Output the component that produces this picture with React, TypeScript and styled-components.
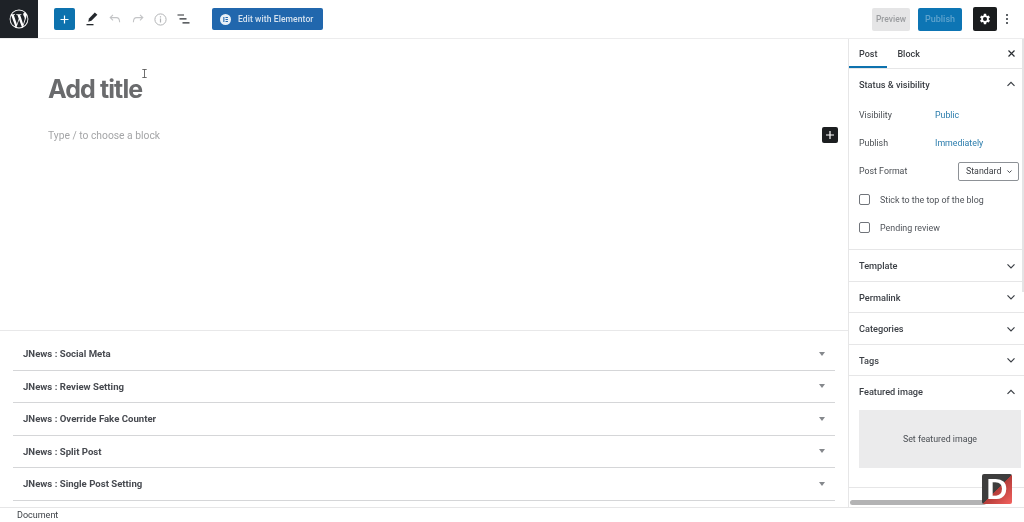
import React from "react";
import styled, { createGlobalStyle } from "styled-components";

const GlobalStyle = createGlobalStyle`
  html, body {
    margin: 0;
    padding: 0;
    background: #fff;
    overflow: hidden;
  }
  body {
    font-family: Roboto, "Liberation Sans", sans-serif;
    color: #2b3036;
  }
`;

const metaBoxes = [
  "JNews : Social Meta",
  "JNews : Review Setting",
  "JNews : Override Fake Counter",
  "JNews : Split Post",
  "JNews : Single Post Setting",
];

const closedPanels = ["Template", "Permalink", "Categories", "Tags"];

const WpLogo = () => (
  <svg width="20" height="20" viewBox="0 0 20 20" fill="#fff">
    <path d="M10 .6a9.4 9.4 0 1 0 0 18.8A9.4 9.4 0 0 0 10 .6zM1.55 10c0-1.22.26-2.38.73-3.43l4.03 11.04A8.45 8.45 0 0 1 1.55 10zM10 18.45c-.83 0-1.63-.12-2.39-.35l2.54-7.37 2.6 7.12.06.12c-.87.31-1.82.48-2.81.48zm1.16-12.41c.51-.03.97-.08.97-.08.46-.06.4-.73-.05-.7 0 0-1.37.1-2.25.1-.83 0-2.23-.1-2.23-.1-.46-.03-.51.67-.06.7 0 0 .43.05.89.08l1.32 3.62-1.86 5.57L4.8 6.04c.51-.03.97-.08.97-.08.46-.06.4-.73-.05-.7 0 0-1.37.1-2.25.1h-.55A8.44 8.44 0 0 1 10 1.55c2.2 0 4.2.84 5.7 2.22h-.11c-.83 0-1.42.72-1.42 1.5 0 .7.4 1.29.83 1.98.32.57.7 1.29.7 2.34 0 .73-.28 1.57-.65 2.75l-.85 2.85-3.04-9.15zm3.09 11.28 2.58-7.46c.48-1.2.64-2.16.64-3.02 0-.31-.02-.6-.06-.87A8.44 8.44 0 0 1 18.45 10c0 3.12-1.69 5.84-4.2 7.32z" />
  </svg>
);

const Chevron = ({ up, size = 12 }: { up?: boolean; size?: number }) => (
  <svg width={size} height={size} viewBox="0 0 12 12" fill="none" stroke="#3a3e44" strokeWidth={size < 12 ? 1.6 : 1.2}>
    <path d={up ? "M2.5 7.8L6 4.3l3.5 3.5" : "M2.5 4.3L6 7.8l3.5-3.5"} />
  </svg>
);

const App: React.FunctionComponent = () => {
  return (
    <Page>
      <GlobalStyle />
      <Header>
        <LogoBox>
          <WpLogo />
        </LogoBox>
        <Tools>
          <AddButton>
            <svg width="9" height="9" viewBox="0 0 9 9" stroke="#fff" strokeWidth="1.2">
              <path d="M4.5 0.5v8M0.5 4.5h8" />
            </svg>
          </AddButton>
          <ToolIcon>
            <svg width="12" height="14" viewBox="0 0 12 14" fill="#24282d">
              <path d="M8.8 0.4l2.6 2.4-6 6-3.2 1 .8-3.2z" />
              <rect x="0.5" y="12" width="7" height="1.3" />
            </svg>
          </ToolIcon>
          <ToolIcon>
            <svg width="12" height="10" viewBox="0 0 12 10" fill="none" stroke="#c3c4c6" strokeWidth="1.1">
              <path d="M4 0.8L1.2 3.6 4 6.4M1.4 3.6h6c2 0 3.2 1.4 3.2 4.6" />
            </svg>
          </ToolIcon>
          <ToolIcon>
            <svg width="12" height="10" viewBox="0 0 12 10" fill="none" stroke="#c3c4c6" strokeWidth="1.1">
              <path d="M8 0.8l2.8 2.8L8 6.4M10.6 3.6h-6c-2 0-3.2 1.4-3.2 4.6" />
            </svg>
          </ToolIcon>
          <ToolIcon>
            <svg width="13" height="13" viewBox="0 0 13 13" fill="none" stroke="#b2b4b6" strokeWidth="1">
              <circle cx="6.5" cy="6.5" r="5.6" />
              <path d="M6.5 5.6v4M6.5 3.2v1.3" strokeWidth="1.2" />
            </svg>
          </ToolIcon>
          <ToolIcon>
            <svg width="13" height="10" viewBox="0 0 13 10" stroke="#2a2e33" strokeWidth="1.2">
              <path d="M0.5 1h6.5M2.5 4.8h7M5.5 8.8h7" />
            </svg>
          </ToolIcon>
        </Tools>
        <ElementorButton>
          <ElementorMark>
            <svg width="11" height="11" viewBox="0 0 10 10">
              <circle cx="5" cy="5" r="5" fill="#e8eff6" />
              <path d="M3 2.7h1v4.6H3zM5 2.7h2.2v.9H5zM5 4.5h2.2v.9H5zM5 6.4h2.2v.9H5z" fill="#2167ad" />
            </svg>
          </ElementorMark>
          Edit with Elementor
        </ElementorButton>
        <HeaderRight>
          <PreviewButton>Preview</PreviewButton>
          <PublishButton>Publish</PublishButton>
          <SettingsButton>
            <svg width="14" height="14" viewBox="0 0 24 24" fill="#fff">
              <path d="M19.4 13a7.6 7.6 0 0 0 0-2l2.1-1.6-2-3.5-2.5 1a7.6 7.6 0 0 0-1.7-1L15 3.2h-4l-.4 2.7a7.6 7.6 0 0 0-1.7 1l-2.4-1-2 3.5L6.6 11a7.6 7.6 0 0 0 0 2l-2.1 1.6 2 3.5 2.5-1a7.6 7.6 0 0 0 1.7 1l.3 2.7h4l.4-2.7a7.6 7.6 0 0 0 1.7-1l2.4 1 2-3.5zM13 15.4a3.5 3.5 0 1 1 0-7 3.5 3.5 0 0 1 0 7z" transform="translate(-1 0)" />
            </svg>
          </SettingsButton>
          <MoreDots>
            <Dot />
            <Dot />
            <Dot />
          </MoreDots>
        </HeaderRight>
      </Header>
      <Body>
        <Editor>
          <Canvas>
            <Title>Add title</Title>
            <BlockRow>
              <Placeholder>Type / to choose a block</Placeholder>
              <BlockAdd>
                <svg width="8" height="8" viewBox="0 0 8 8" stroke="#fff" strokeWidth="1.2">
                  <path d="M4 0v8M0 4h8" />
                </svg>
              </BlockAdd>
            </BlockRow>
            <TextCursor>
              <svg width="5" height="9" viewBox="0 0 5 9" fill="none" stroke="#4a4a4a" strokeWidth="0.8">
                <path d="M0.3 0.5h4.4M0.3 8.5h4.4M2.5 0.5v8" />
              </svg>
            </TextCursor>
          </Canvas>
          <MetaBoxes>
            {metaBoxes.map((item) => (
              <MetaRow key={item}>
                <MetaTitle>{item}</MetaTitle>
                <Caret />
              </MetaRow>
            ))}
          </MetaBoxes>
        </Editor>
        <Sidebar>
          <Tabs>
            <Tab $active>Post</Tab>
            <Tab>Block</Tab>
            <CloseIcon>
              <svg width="7" height="7" viewBox="0 0 7 7" stroke="#2a2e33" strokeWidth="1.2">
                <path d="M0.5 0.5l6 6M6.5 0.5l-6 6" />
              </svg>
            </CloseIcon>
          </Tabs>
          <Panel>
            <PanelHead>
              <PanelTitle>Status &amp; visibility</PanelTitle>
              <Chevron up />
            </PanelHead>
            <StatusBody>
              <Field>
                <FieldLabel>Visibility</FieldLabel>
                <FieldLink>Public</FieldLink>
              </Field>
              <Field>
                <FieldLabel>Publish</FieldLabel>
                <FieldLink>Immediately</FieldLink>
              </Field>
              <Field>
                <FieldLabel>Post Format</FieldLabel>
                <FormatSelect>
                  Standard
                  <Chevron size={7} />
                </FormatSelect>
              </Field>
              <Field>
                <CheckBox />
                <CheckLabel>Stick to the top of the blog</CheckLabel>
              </Field>
              <Field>
                <CheckBox />
                <CheckLabel>Pending review</CheckLabel>
              </Field>
            </StatusBody>
          </Panel>
          {closedPanels.map((item) => (
            <Panel key={item}>
              <PanelHead>
                <PanelTitle>{item}</PanelTitle>
                <Chevron />
              </PanelHead>
            </Panel>
          ))}
          <Panel>
            <PanelHead>
              <PanelTitle>Featured image</PanelTitle>
              <Chevron up />
            </PanelHead>
            <FeaturedBody>
              <FeaturedBox>Set featured image</FeaturedBox>
            </FeaturedBody>
          </Panel>
          <VerticalThumb />
          <HorizontalThumb />
          <Badge>
            <BadgeLetter>D</BadgeLetter>
          </Badge>
        </Sidebar>
      </Body>
      <Footer>Document</Footer>
    </Page>
  );
};

export default App;

const Page = styled.div`
  width: 1024px;
  height: 522px;
  display: flex;
  flex-direction: column;
  overflow: hidden;
  filter: blur(0.45px);
`;

const Header = styled.header`
  height: 38px;
  flex-shrink: 0;
  display: flex;
  align-items: center;
  box-sizing: content-box;
  border-bottom: 1px solid #ececed;
`;

const LogoBox = styled.div`
  width: 38px;
  height: 38px;
  background: #1e2227;
  display: flex;
  align-items: center;
  justify-content: center;
`;

const Tools = styled.div`
  display: flex;
  align-items: center;
  margin-left: 16px;
`;

const AddButton = styled.div`
  width: 21px;
  height: 22px;
  background: #0d72ae;
  border-radius: 2px;
  display: flex;
  align-items: center;
  justify-content: center;
  margin-right: 5px;
`;

const ToolIcon = styled.div`
  width: 23px;
  height: 21px;
  display: flex;
  align-items: center;
  justify-content: center;
`;

const ElementorButton = styled.div`
  margin-left: 17px;
  width: 111px;
  height: 22px;
  box-sizing: border-box;
  background: #2167ad;
  border-radius: 2px;
  color: #d5e2ef;
  font-size: 8.5px;
  font-weight: 500;
  letter-spacing: 0.1px;
  display: flex;
  align-items: center;
  padding-left: 8px;
`;

const ElementorMark = styled.span`
  display: flex;
  margin-right: 7px;
`;

const HeaderRight = styled.div`
  margin-left: auto;
  display: flex;
  align-items: center;
`;

const PreviewButton = styled.div`
  width: 38px;
  height: 23px;
  background: #e5e5e6;
  border-radius: 2px;
  color: #9a9c9f;
  font-size: 8.5px;
  font-weight: 500;
  display: flex;
  align-items: center;
  justify-content: center;
  margin-right: 8px;
`;

const PublishButton = styled.div`
  width: 44px;
  height: 23px;
  background: #0d75b4;
  border-radius: 2px;
  color: #5fa3cd;
  font-size: 9px;
  font-weight: 500;
  display: flex;
  align-items: center;
  justify-content: center;
  margin-right: 11px;
`;

const SettingsButton = styled.div`
  width: 24px;
  height: 24px;
  background: #1a1c1e;
  border-radius: 2px;
  display: flex;
  align-items: center;
  justify-content: center;
  margin-right: 8px;
`;

const MoreDots = styled.div`
  width: 4px;
  display: flex;
  flex-direction: column;
  align-items: center;
  gap: 2px;
  margin-right: 15px;
`;

const Dot = styled.span`
  width: 2px;
  height: 2px;
  border-radius: 50%;
  background: #2b3036;
`;

const Body = styled.div`
  flex: 1;
  min-height: 0;
  display: flex;
`;

const Editor = styled.main`
  flex: 1;
  min-width: 0;
  display: flex;
  flex-direction: column;
`;

const Canvas = styled.div`
  position: relative;
  height: 292px;
  flex-shrink: 0;
  box-sizing: border-box;
  padding: 33px 10px 0 48px;
  border-bottom: 1px solid #e8e8e9;
`;

const Title = styled.h1`
  margin: 0;
  height: 35px;
  line-height: 35px;
  font-family: Inter, Roboto, sans-serif;
  font-size: 25px;
  font-weight: 700;
  letter-spacing: -0.9px;
  color: #6a6b6d;
`;

const BlockRow = styled.div`
  margin-top: 20px;
  display: flex;
  align-items: center;
  justify-content: space-between;
`;

const Placeholder = styled.div`
  font-size: 10.3px;
  color: #a4a5a7;
`;

const BlockAdd = styled.div`
  width: 16px;
  height: 16px;
  background: #1c1e20;
  border-radius: 2px;
  display: flex;
  align-items: center;
  justify-content: center;
`;

const TextCursor = styled.div`
  position: absolute;
  left: 142px;
  top: 30px;
  display: flex;
`;

const MetaBoxes = styled.div`
  padding: 7px 13px 0;
`;

const MetaRow = styled.div`
  height: 32.5px;
  box-sizing: border-box;
  padding: 0 10px;
  display: flex;
  align-items: center;
  justify-content: space-between;
  border-bottom: 1px solid #d5d6d8;
`;

const MetaTitle = styled.div`
  font-size: 9.6px;
  font-weight: 700;
  color: #474a50;
`;

const Caret = styled.span`
  width: 0;
  height: 0;
  border-left: 3px solid transparent;
  border-right: 3px solid transparent;
  border-top: 4px solid #85888c;
`;

const Sidebar = styled.aside`
  position: relative;
  width: 175px;
  flex-shrink: 0;
  overflow: hidden;
  border-left: 1px solid #e6e6e7;
`;

const Tabs = styled.div`
  height: 29px;
  display: flex;
  align-items: stretch;
  border-bottom: 1px solid #e6e6e7;
`;

const Tab = styled.div<{ $active?: boolean }>`
  padding: 0 10px;
  display: flex;
  align-items: center;
  justify-content: center;
  font-size: 9px;
  font-weight: 500;
  color: #3a3d42;
  box-shadow: ${(p) => (p.$active ? "inset 0 -2px 0 #0d72ae" : "none")};
`;

const CloseIcon = styled.div`
  margin-left: auto;
  width: 25px;
  display: flex;
  align-items: center;
  justify-content: center;
`;

const Panel = styled.section`
  border-bottom: 1px solid #e6e6e7;
`;

const PanelHead = styled.div`
  height: 30.5px;
  display: flex;
  align-items: center;
  justify-content: space-between;
  padding: 0 7px 0 10px;
`;

const PanelTitle = styled.div`
  font-size: 9.2px;
  font-weight: 500;
  color: #3a3e44;
`;

const StatusBody = styled.div`
  display: flex;
  flex-direction: column;
  padding: 1px 0 7.5px 10px;
`;

const Field = styled.div`
  height: 28.3px;
  display: flex;
  align-items: center;
  flex-shrink: 0;
`;

const FieldLabel = styled.div`
  width: 76px;
  flex-shrink: 0;
  font-size: 8.8px;
  color: #4a4e53;
`;

const FieldLink = styled.div`
  font-size: 8.8px;
  color: #2a7cac;
`;

const FormatSelect = styled.div`
  margin-left: 23px;
  width: 61px;
  height: 19px;
  flex-shrink: 0;
  box-sizing: border-box;
  border: 1px solid #8d9196;
  border-radius: 2px;
  font-size: 8.8px;
  color: #3a3d42;
  display: flex;
  align-items: center;
  justify-content: space-between;
  padding: 0 5px 0 7px;
`;

const CheckBox = styled.div`
  width: 11px;
  height: 11px;
  box-sizing: border-box;
  border: 1px solid #70747a;
  border-radius: 2px;
  flex-shrink: 0;
  margin-right: 10px;
`;

const CheckLabel = styled.div`
  font-size: 8.9px;
  color: #50545a;
`;

const FeaturedBody = styled.div`
  padding: 3px 3px 19px 10px;
`;

const FeaturedBox = styled.div`
  height: 58px;
  background: #ebebec;
  display: flex;
  align-items: center;
  justify-content: center;
  font-size: 8.8px;
  color: #4a4e53;
`;

const VerticalThumb = styled.div`
  position: absolute;
  right: 0;
  top: 0;
  width: 2.5px;
  height: 253px;
  background: #e4e4e5;
`;

const HorizontalThumb = styled.div`
  position: absolute;
  left: 1px;
  bottom: 2px;
  width: 136px;
  height: 5px;
  border-radius: 2.5px;
  background: #b3b3b4;
`;

const Badge = styled.div`
  position: absolute;
  right: 12px;
  bottom: 3px;
  width: 30px;
  height: 30px;
  background: linear-gradient(135deg, #3d3d3d 50%, #b23b38 50%, #f4625e 100%);
  border-radius: 2px;
  display: flex;
  align-items: center;
  justify-content: center;
`;

const BadgeLetter = styled.span`
  font-family: "Liberation Sans", sans-serif;
  font-size: 29px;
  font-weight: 700;
  line-height: 1;
  color: #fff;
`;

const Footer = styled.footer`
  height: 15px;
  flex-shrink: 0;
  box-sizing: border-box;
  border-top: 1px solid #e6e6e7;
  padding-left: 17px;
  font-size: 9px;
  line-height: 14px;
  color: #3c4046;
  display: flex;
  align-items: center;
`;
